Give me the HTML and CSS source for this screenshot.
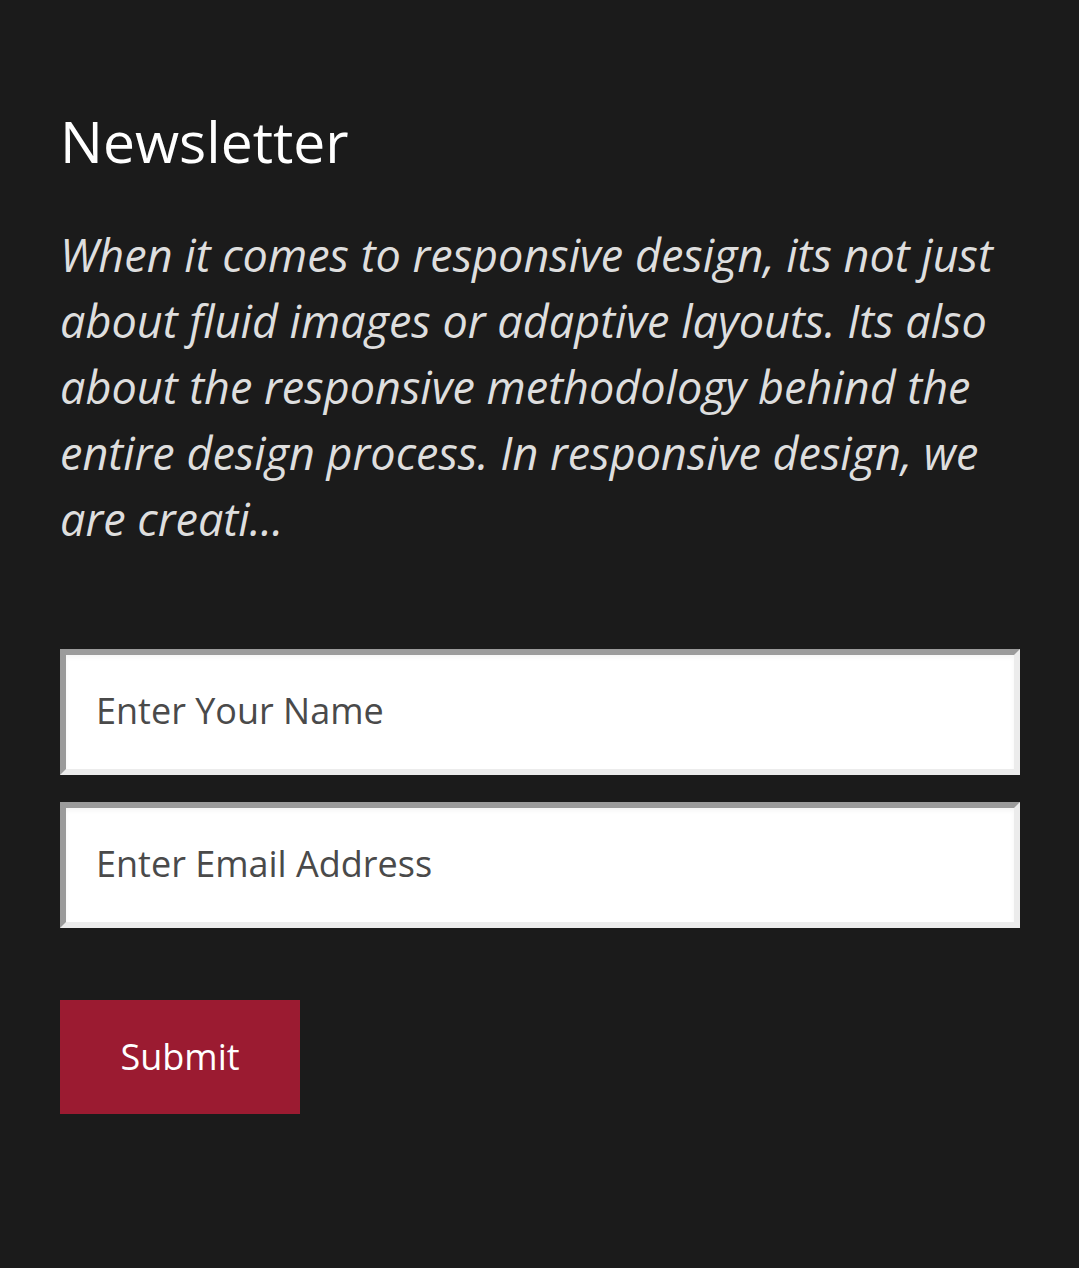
FILE: index.html
```html
<!DOCTYPE html>
<html lang="en">
<head>
<meta charset="utf-8">
<title>Newsletter</title>
<link rel="stylesheet" href="styles.css">
</head>
<body>
<section class="newsletter">
  <h2 class="title">Newsletter</h2>
  <p class="intro">When it comes to responsive design, its not just about fluid images or adaptive layouts. Its also about the responsive methodology behind the entire design process. In responsive design, we are creati...</p>
  <form class="form">
    <input class="field" type="text" placeholder="Enter Your Name">
    <input class="field" type="email" placeholder="Enter Email Address">
    <button class="submit" type="button">Submit</button>
  </form>
</section>
</body>
</html>
```
FILE: styles.css
```css
html, body {
  margin: 0;
  padding: 0;
  background: #1b1b1b;
}
body {
  font-family: "Open Sans", "Liberation Sans", sans-serif;
}
.newsletter {
  padding: 105px 59px 0 60px;
}
.title {
  margin: 0;
  font-size: 57px;
  font-weight: 400;
  line-height: 72px;
  color: #ffffff;
}
.intro {
  margin: 45px 0 0;
  font-size: 45px;
  font-style: italic;
  line-height: 66px;
  color: #dedede;
}
.form {
  display: flex;
  flex-direction: column;
  align-items: flex-start;
  gap: 27px;
  margin-top: 97px;
}
.field {
  box-sizing: border-box;
  width: 960px;
  height: 126px;
  margin: 0;
  padding: 0 30px 3px;
  border: 6px solid;
  border-color: #9b9b9b #ececec #ececec #9b9b9b;
  background: #ffffff;
  box-shadow: inset 0 3px 4px rgba(0,0,0,0.04);
  font-family: "Open Sans", "Liberation Sans", sans-serif;
  font-size: 36px;
  color: #444444;
  outline: none;
}
.field::placeholder {
  color: #4a4a4a;
  opacity: 1;
}
.submit {
  margin-top: 45px;
  width: 240px;
  height: 114px;
  border: 0;
  padding: 0 0 2px;
  background: #9b1b31;
  color: #ffffff;
  font-family: "Open Sans", "Liberation Sans", sans-serif;
  font-size: 36px;
  cursor: pointer;
}
```
